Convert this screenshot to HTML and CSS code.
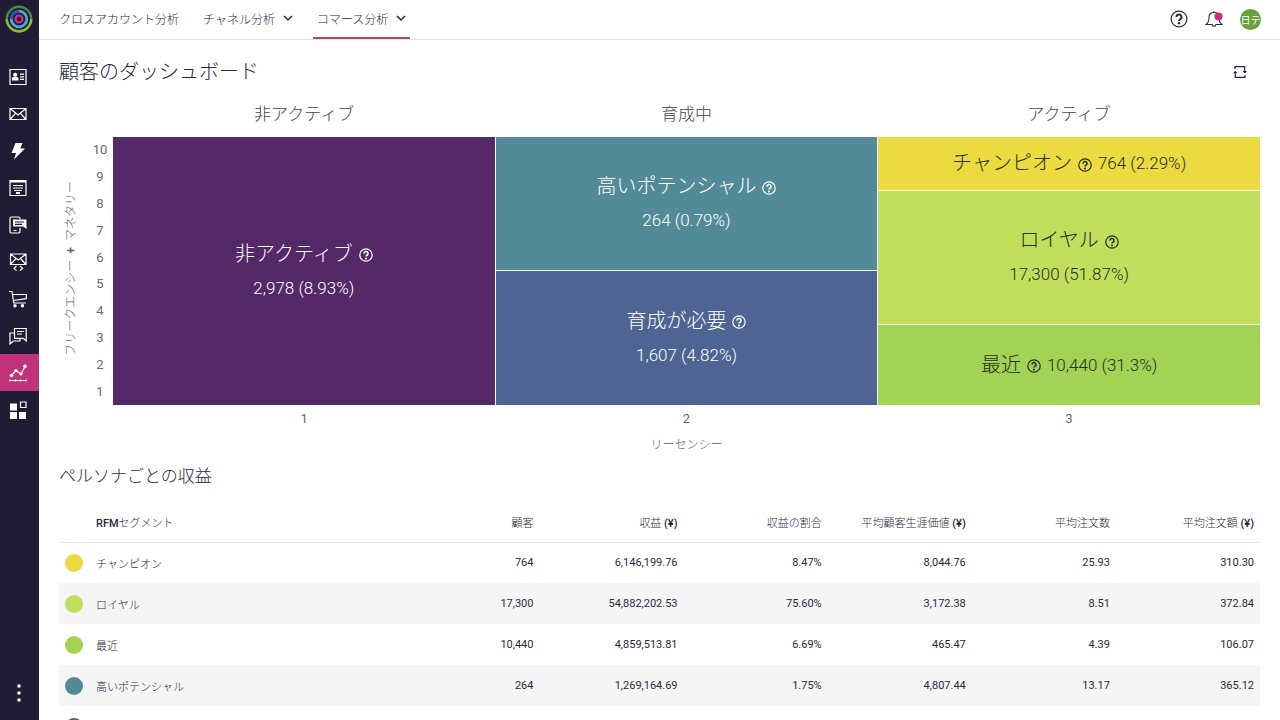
FILE: index.html
```html
<!DOCTYPE html>
<html lang="ja">
<head>
<meta charset="utf-8">
<meta name="viewport" content="width=device-width, initial-scale=1">
<title>顧客のダッシュボード</title>
<link rel="stylesheet" href="styles.css">
</head>
<body>
<svg class="defs" aria-hidden="true">
  <symbol id="help" viewBox="0 0 14 14">
    <circle cx="7" cy="7" r="6.2" fill="none" stroke="currentColor" stroke-width="1.2"/>
    <path d="M5 5.6a2 2 0 1 1 3 1.6c-.7.4-1 .7-1 1.4" fill="none" stroke="currentColor" stroke-width="1.6"/>
    <circle cx="7" cy="10.4" r="1" fill="currentColor"/>
  </symbol>
  <symbol id="chevron" viewBox="0 0 10 10">
    <path d="M1 3l4 4 4-4" fill="none" stroke="currentColor" stroke-width="1.5"/>
  </symbol>
</svg>
<div class="app">
  <aside class="sidebar">
    <a class="logo" href="#" aria-label="ホーム">
      <svg width="28" height="28" viewBox="0 0 28 28" fill="none">
        <circle cx="14" cy="14" r="12.2" stroke="#3f8f45" stroke-width="2.4"/>
        <path d="M1.8 14a12.2 12.2 0 0 0 24.4 0" stroke="#93b92c" stroke-width="2.4"/>
        <circle cx="14" cy="14" r="7.8" stroke="#4fa3dc" stroke-width="2.8"/>
        <path d="M6.2 14a7.8 7.8 0 0 1 7.8-7.8" stroke="#2b50a8" stroke-width="2.8"/>
        <circle cx="14" cy="14" r="3.4" stroke="#d02f80" stroke-width="2.4"/>
      </svg>
    </a>
    <nav class="side-nav" aria-label="メイン">
      <a class="side-link" href="#" aria-label="連絡先"><svg class="side-icon" viewBox="0 0 18 18"><path d="M1 1.5h16v15H1z"/><circle class="solid" cx="6.2" cy="6.800" r="2.100"/><path class="solid" d="M2.900 12.500V10.500q0-1.500 1.500-1.500h3.600q1.500 0 1.500 1.500v2z"/><path d="M11 6.200h4M11 8.800h4M11 11.400h4"/></svg></a>
      <a class="side-link" href="#" aria-label="メール"><svg class="side-icon" viewBox="0 0 18 18"><path d="M1 3.500h16v11H1zM1 3.500l8 6.500 8-6.500M1 14.500l5.500-6.200M17 14.500l-5.500-6.200"/></svg></a>
      <a class="side-link" href="#" aria-label="オートメーション"><svg class="side-icon" viewBox="0 0 18 18"><path class="solid" d="M6.500 1h7l-2.200 5.500H16L5 17.500l2-6.500H2.500z"/></svg></a>
      <a class="side-link" href="#" aria-label="フォーム"><svg class="side-icon" viewBox="0 0 18 18"><path d="M1 1.500h16v15H1zM4 6.500h10M4 9h10M5 11.500h8"/><path class="solid" d="M1 1h16v2.500H1zM7 13h4v2H7z"/></svg></a>
      <a class="side-link" href="#" aria-label="モバイル"><svg class="side-icon" viewBox="0 0 18 18"><path d="M11 3V2.500q0-1.500-1.500-1.500h-7Q1 1 1 2.500v13Q1 17 2.500 17h7q1.500 0 1.500-1.500V12M4.500 14.500h3"/><path class="solid" d="M4 3.500h13.500V13L14 10.500H4z"/><path class="ink" d="M6 6h9M6 8.300h7"/></svg></a>
      <a class="side-link" href="#" aria-label="メールコード"><svg class="side-icon" viewBox="0 0 18 18"><path d="M1.500 1h15.500v10.500H1.500zM1.500 1l7.700 6L17 1M1.500 11.500l5.500-6M17 11.500l-5.500-6M7.500 13L5 15.300l2.500 2.300M11 13l2.500 2.300-2.500 2.300"/></svg></a>
      <a class="side-link" href="#" aria-label="コマース"><svg class="side-icon" viewBox="0 0 18 18"><path d="M0 1.500h3l1.800 11.500h12M3.300 4.500h14v4.200L4.300 10.500"/><circle class="solid" cx="6" cy="15.700" r="1.700"/><circle class="solid" cx="13.500" cy="15.700" r="1.700"/></svg></a>
      <a class="side-link" href="#" aria-label="チャット"><svg class="side-icon" viewBox="0 0 18 18"><path d="M5.500 1.500h11.700V14l-3-2.700H5.500zM8 4.500h7M8 7h5M5.500 6H1v11l3.500-3h6.500v-2.500"/></svg></a>
      <a class="side-link active" href="#" aria-label="分析"><svg class="side-icon" viewBox="0 0 18 18"><path d="M2.500 11.500l4.500-5 5 3.500 4-7.500M.5 16.500h17"/><circle class="solid" cx="2.500" cy="11.500" r="1.800"/><circle class="solid" cx="7" cy="6.500" r="1.600"/><circle class="solid" cx="12" cy="10" r="1.600"/><circle class="solid" cx="16" cy="2.300" r="1.800"/><path d="M1 15.500v2M6.500 15.500v2M11.500 15.500v2M17 15.500v2"/></svg></a>
      <a class="side-link" href="#" aria-label="アドオン"><svg class="side-icon" viewBox="0 0 18 18"><path class="solid" d="M1 2.500h7v7H1zM1 11h7v7H1zM10 11h7v7h-7z"/><path d="M11.500 1h5.500v5.500h-5.500z"/></svg></a>
    </nav>
    <button class="more" type="button" aria-label="その他"><svg width="4" height="18" viewBox="0 0 4 18" fill="currentColor"><circle cx="2" cy="2" r="1.800"/><circle cx="2" cy="9" r="1.800"/><circle cx="2" cy="16" r="1.800"/></svg></button>
  </aside>
  <div class="page">
    <header class="topbar">
      <nav class="tabs" aria-label="分析">
        <a class="tab" href="#">クロスアカウント分析</a>
        <a class="tab" href="#">チャネル分析<svg class="chevron"><use href="#chevron"/></svg></a>
        <a class="tab current" href="#">コマース分析<svg class="chevron"><use href="#chevron"/></svg></a>
      </nav>
      <div class="tools">
        <button class="tool" type="button" aria-label="ヘルプ"><svg width="18" height="18" viewBox="0 0 18 18" fill="none" stroke="currentColor"><circle cx="9" cy="9" r="7.900" stroke-width="1.200"/><path d="M6.500 7a2.500 2.500 0 1 1 3.700 2.200C9.300 9.700 9 10 9 11" stroke-width="1.900"/><circle cx="9" cy="13.300" r="1.200" fill="currentColor" stroke="none"/></svg></button>
        <button class="tool" type="button" aria-label="通知"><svg width="18" height="18" viewBox="0 0 18 18" fill="none"><path d="M9 1v1.500M1 14.500c2.500-1.500 3-3 3-7q0-5 5-5t5 5c0 4 .5 5.500 3 7h-6q-.5 1.800-2 1.800T7 14.500z" stroke="currentColor" stroke-width="1.100"/><circle cx="13.500" cy="6.500" r="4" fill="#c9307f"/></svg></button>
        <button class="avatar" type="button">日テ</button>
      </div>
    </header>
    <main class="content">
      <div class="title-row">
        <h1>顧客のダッシュボード</h1>
        <button class="tool refresh" type="button" aria-label="更新"><svg width="14" height="14" viewBox="0 0 14 14" fill="none" stroke="currentColor" stroke-width="1.200"><path d="M2 4V1.700h9.700V7M12 10v2.300H2.300V7"/><path d="M9.500 6h4.500l-2.200 2.500zM0 8.300h4.500L2.300 5.800z" fill="currentColor" stroke="none"/></svg></button>
      </div>
      <section class="matrix" aria-label="RFMマトリックス">
        <div class="heads"><h2>非アクティブ</h2><h2>育成中</h2><h2>アクティブ</h2></div>
        <div class="y-title"><span>フリークエンシー<b class="plus">+</b>マネタリー</span></div>
        <div class="y-axis"><span>10</span><span>9</span><span>8</span><span>7</span><span>6</span><span>5</span><span>4</span><span>3</span><span>2</span><span>1</span></div>
        <div class="tiles">
          <div class="tile inactive"><span class="name">非アクティブ <svg class="help"><use href="#help"/></svg></span><span class="value">2,978 (8.93%)</span></div>
          <div class="tile potential"><span class="name">高いポテンシャル <svg class="help"><use href="#help"/></svg></span><span class="value">264 (0.79%)</span></div>
          <div class="tile nurture"><span class="name">育成が必要 <svg class="help"><use href="#help"/></svg></span><span class="value">1,607 (4.82%)</span></div>
          <div class="tile champion"><span class="name">チャンピオン <svg class="help"><use href="#help"/></svg></span><span class="value">764 (2.29%)</span></div>
          <div class="tile loyal"><span class="name">ロイヤル <svg class="help"><use href="#help"/></svg></span><span class="value">17,300 (51.87%)</span></div>
          <div class="tile recent"><span class="name">最近 <svg class="help"><use href="#help"/></svg></span><span class="value">10,440 (31.3%)</span></div>
        </div>
        <div class="x-axis"><span>1</span><span>2</span><span>3</span></div>
        <div class="x-title">リーセンシー</div>
      </section>
      <section>
        <h3>ペルソナごとの収益</h3>
        <table>
          <thead><tr><th class="mark"></th><th class="segment"><b>RFM</b>セグメント</th><th>顧客</th><th>収益 <b>(¥)</b></th><th>収益の割合</th><th>平均顧客生涯価値 <b>(¥)</b></th><th>平均注文数</th><th>平均注文額 <b>(¥)</b></th></tr></thead>
          <tbody>
            <tr><td class="mark"><span class="dot champion"></span></td><td class="segment">チャンピオン</td><td>764</td><td>6,146,199.76</td><td>8.47%</td><td>8,044.76</td><td>25.93</td><td>310.30</td></tr>
            <tr><td class="mark"><span class="dot loyal"></span></td><td class="segment">ロイヤル</td><td>17,300</td><td>54,882,202.53</td><td>75.60%</td><td>3,172.38</td><td>8.51</td><td>372.84</td></tr>
            <tr><td class="mark"><span class="dot recent"></span></td><td class="segment">最近</td><td>10,440</td><td>4,859,513.81</td><td>6.69%</td><td>465.47</td><td>4.39</td><td>106.07</td></tr>
            <tr><td class="mark"><span class="dot potential"></span></td><td class="segment">高いポテンシャル</td><td>264</td><td>1,269,164.69</td><td>1.75%</td><td>4,807.44</td><td>13.17</td><td>365.12</td></tr>
            <tr><td class="mark"><span class="dot nurture"></span></td><td class="segment"></td><td></td><td></td><td></td><td></td><td></td></tr>
          </tbody>
        </table>
      </section>
    </main>
  </div>
</div>
</body>
</html>
```
FILE: styles.css
```css
* { box-sizing: border-box; }
body {
  margin: 0;
  font-family: Roboto, "Noto Sans CJK JP", sans-serif;
  font-weight: 300;
  color: #2a2840;
  background: #fff;
}
h1, h2, h3 { margin: 0; font-weight: 300; }
a { color: inherit; text-decoration: none; }
button { padding: 0; border: 0; background: none; color: inherit; font: inherit; cursor: pointer; }
.defs { display: none; }
.app { display: flex; height: 100vh; overflow: hidden; }

.sidebar {
  flex: 0 0 39px;
  display: flex;
  flex-direction: column;
  background: #211c35;
  color: #fff;
}
.logo { display: flex; justify-content: center; padding: 5px 2px 25px 0; }
.side-nav { flex: 1; }
.side-link { display: flex; align-items: center; justify-content: center; height: 37px; padding-right: 3px; }
.side-link.active { background: #c1327b; }
.side-icon { width: 18px; height: 18px; fill: none; stroke: #fff; stroke-width: 1.2; overflow: visible; }
.side-icon .solid { fill: #fff; stroke: none; }
.side-icon .ink { stroke: #211c35; }
.more { display: flex; align-items: center; justify-content: center; height: 54px; padding-right: 1px; }

.page { flex: 1; min-width: 0; display: flex; flex-direction: column; }
.topbar {
  flex: 0 0 40px;
  display: flex;
  justify-content: space-between;
  padding: 0 19px 0 16px;
  border-bottom: 1px solid #e3e3e6;
}
.tabs { display: flex; gap: 16px; }
.tab {
  display: flex;
  align-items: center;
  gap: 8px;
  padding: 0 4px 1px;
  border-bottom: 2px solid transparent;
  font-size: 12px;
}
.tab.current { border-color: #b5426f; }
.chevron { width: 10px; height: 10px; }
.tools { display: flex; align-items: center; gap: 17px; padding-bottom: 1px; }
.tool { display: flex; }
.avatar {
  display: flex;
  align-items: center;
  justify-content: center;
  width: 21px;
  height: 21px;
  border-radius: 50%;
  overflow: hidden;
  background: #67a23f;
  color: #fff;
  font-size: 10px;
  font-weight: 400;
  white-space: nowrap;
}

.content { flex: 1; min-height: 0; padding: 0 20px; overflow-y: auto; scrollbar-width: none; }
.title-row { display: flex; align-items: center; justify-content: space-between; height: 64px; padding-right: 13px; }
h1 { font-size: 20px; line-height: 28px; }

.matrix {
  display: grid;
  grid-template-columns: 24px 30px 1fr;
  grid-template-rows: 33px 268px 28px 24px;
}
.heads, .tiles, .x-axis, .x-title { grid-column: 3; }
.heads, .x-axis { display: grid; grid-template-columns: repeat(3, 1fr); text-align: center; }
h2 { font-size: 17px; line-height: 20px; color: #45435a; }
.y-title {
  grid-column: 1;
  display: flex;
  align-items: center;
  justify-content: center;
  padding-bottom: 6px;
  font-size: 12px;
  line-height: 16px;
  color: #5f5e70;
}
.y-title span { writing-mode: vertical-rl; text-orientation: sideways; transform: rotate(180deg); white-space: nowrap; }
.plus { margin: 6px 0; font-weight: 500; }
.y-axis { display: grid; grid-template-rows: repeat(10, 1fr); align-items: center; padding-left: 4px; text-align: center; }
.y-axis, .x-axis { font-size: 13px; color: #686777; font-weight: 400; }
.y-axis { line-height: 16px; }
.x-axis { line-height: 28px; }
.tiles {
  display: grid;
  grid-template-columns: repeat(3, 1fr);
  grid-template-rows: repeat(10, 1fr);
  grid-auto-flow: column;
  column-gap: 1px;
}
.tile { display: flex; flex-direction: column; align-items: center; justify-content: center; gap: 6px; color: #fff; }
.tile.potential, .tile.champion, .tile.loyal { border-bottom: 1px solid #f4f6ea; }
.name { display: flex; align-items: center; gap: 6px; font-size: 20px; line-height: 28px; }
.value { font-size: 17px; line-height: 28px; }
.help { width: 14px; height: 14px; margin-top: 3px; }
.tile.inactive { grid-row: span 10; }
.tile.potential, .tile.nurture, .tile.loyal { grid-row: span 5; }
.tile.champion { grid-row: span 2; }
.tile.recent { grid-row: span 3; }
.tile.champion, .tile.recent { flex-direction: row; }
.tile.champion, .tile.recent, .tile.loyal { color: #26301c; }
.inactive { background: #552867; }
.potential { background: #528b97; }
.nurture { background: #4e6492; }
.champion { background: #ebda40; }
.loyal { background: #c1de5d; }
.recent { background: #a2d355; }
.x-title { text-align: center; font-size: 12px; line-height: 24px; color: #5f5e70; }

h3 { padding-top: 5px; font-size: 17px; line-height: 28px; }
table { width: 100%; margin-top: 12px; border-collapse: collapse; table-layout: fixed; font-size: 11px; }
th, td { width: 12%; height: 41px; padding: 0 6px 0 0; text-align: right; font-weight: 400; white-space: nowrap; }
th { height: 40px; font-weight: 300; }
th b { font-weight: 500; }
th.mark, td.mark { width: 37px; padding: 0 0 0 6px; }
th.segment, td.segment { width: auto; text-align: left; font-weight: 300; }
thead tr { border-bottom: 1px solid #e6e6e9; }
tbody tr:nth-child(even) { background: #f5f5f5; }
.dot { display: block; width: 18px; height: 18px; border-radius: 50%; }
```
